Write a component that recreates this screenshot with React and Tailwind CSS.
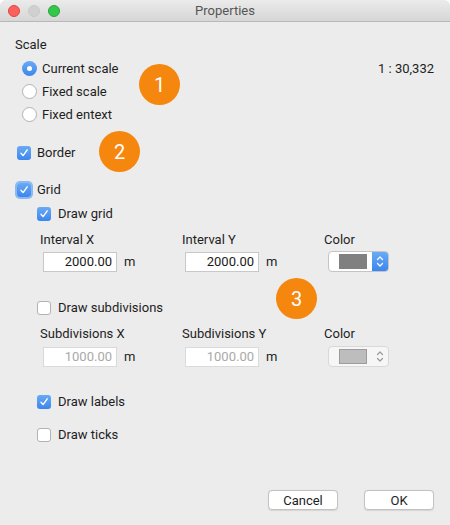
import React from 'react';

const Check = ({ checked, focus, className = '' }) => (
  <span
    className={`flex h-[14px] w-[14px] shrink-0 items-center justify-center rounded-[3px] ${
      checked ? 'bg-gradient-to-b from-[#6aaaf5] to-[#3b86ee]' : 'border border-[#b2b2b2] bg-white'
    } ${focus ? 'ring-[2px] ring-[#8ab8f0]' : ''} ${className}`}
  >
    {checked && (
      <svg width="10" height="10" viewBox="0 0 10 10">
        <path d="M2 5.3 L4.1 7.6 L8.2 1.8" fill="none" stroke="#fff" strokeWidth="1.4" strokeLinecap="round" strokeLinejoin="round" />
      </svg>
    )}
  </span>
);

const Radio = ({ checked }) => (
  <span
    className={`flex h-[15px] w-[15px] shrink-0 items-center justify-center rounded-full ${
      checked ? 'bg-gradient-to-b from-[#6aaaf5] to-[#3b86ee]' : 'border border-[#b2b2b2] bg-white'
    }`}
  >
    {checked && <span className="h-[5px] w-[5px] rounded-full bg-white" />}
  </span>
);

const Badge = ({ n, className }) => (
  <div
    className={`absolute flex h-[41px] w-[41px] items-center justify-center rounded-full bg-[#f5870e] text-[20px] text-white ${className}`}
  >
    {n}
  </div>
);

const Field = ({ value, disabled }) => (
  <div className="flex items-center">
    <div
      className={`ml-[3px] flex h-[20px] w-[74px] items-center justify-end border border-[#c8c8c8] bg-white pr-[4px] text-[13px] ${
        disabled ? 'border-[#dadada] text-[#a9a9a9]' : 'text-[#1a1a1a]'
      }`}
    >
      {value}
    </div>
    <span className="ml-[7px] text-[13px]">m</span>
  </div>
);

const ColorPop = ({ disabled }) => (
  <div
    className={`ml-[4px] flex h-[21px] w-[61px] overflow-hidden rounded-[4px] border ${
      disabled ? 'border-[#d8d8d8] bg-[#f6f6f6]' : 'border-[#c4c4c4] bg-white'
    }`}
  >
    <div className="flex flex-1 items-center pl-[10px]">
      <div className={`h-[15px] w-[28px] ${disabled ? 'border border-[#9c9c9c] bg-[#bdbdbd]' : 'bg-[#808080]'}`} />
    </div>
    <div
      className={`flex w-[16px] items-center justify-center ${
        disabled ? '' : 'bg-gradient-to-b from-[#6aaaf5] to-[#3b86ee]'
      }`}
    >
      <svg width="8" height="13" viewBox="0 0 8 13">
        <path
          d="M1.5 4.5 L4 2 L6.5 4.5 M1.5 8.5 L4 11 L6.5 8.5"
          fill="none"
          stroke={disabled ? '#9a9a9a' : '#fff'}
          strokeWidth="1.2"
          strokeLinecap="round"
          strokeLinejoin="round"
        />
      </svg>
    </div>
  </div>
);

export default function App() {
  return (
    <div className="bg-white" style={{ fontFamily: 'Roboto, "Liberation Sans", sans-serif' }}>
      <div className="relative h-[525px] w-[450px] overflow-hidden rounded-t-[6px] bg-[#ececec] text-[13px] text-[#1e1e1e]">
        {/* title bar */}
        <div className="relative flex h-[22px] items-center justify-center border-b border-[#b8b8b8] bg-gradient-to-b from-[#ebebeb] to-[#d6d6d6]">
          <div className="absolute left-[8px] top-[5px] flex gap-[8px]">
            <span className="h-[12px] w-[12px] rounded-full border border-[#e0443e] bg-[#fc605c]" />
            <span className="h-[12px] w-[12px] rounded-full border border-[#c8c8c8] bg-[#d0d0d0]" />
            <span className="h-[12px] w-[12px] rounded-full border border-[#2aa43a] bg-[#34c84a]" />
          </div>
          <span className="text-[13px] text-[#555]">Properties</span>
        </div>

        <div className="px-[15px]">
          <div className="mt-[15px] flex h-[16px] items-center">Scale</div>

          <div className="mt-[4px] pl-[7px]">
            <div className="flex h-[23px] items-center">
              <Radio checked />
              <span className="ml-[5px]">Current scale</span>
              <span className="ml-auto mr-[1px]">1 : 30,332</span>
            </div>
            <div className="flex h-[23px] items-center">
              <Radio />
              <span className="ml-[5px]">Fixed scale</span>
            </div>
            <div className="flex h-[23px] items-center">
              <Radio />
              <span className="ml-[5px]">Fixed entext</span>
            </div>
          </div>

          <div className="mt-[16px] flex h-[22px] items-center pl-[2px]">
            <Check checked />
            <span className="ml-[6px]">Border</span>
          </div>

          <div className="mt-[15px] flex h-[22px] items-center pl-[2px]">
            <Check checked focus />
            <span className="ml-[6px]">Grid</span>
          </div>

          <div className="pl-[22px]">
            <div className="mt-[2px] flex h-[22px] items-center">
              <Check checked />
              <span className="ml-[7px]">Draw grid</span>
            </div>

            <div className="mt-[5px] grid h-[16px] grid-cols-[142px_142px_1fr] items-center pl-[3px]">
              <span>Interval X</span>
              <span>Interval Y</span>
              <span>Color</span>
            </div>
            <div className="mt-[5px] grid h-[21px] grid-cols-[142px_142px_1fr] items-center pl-[3px]">
              <Field value="2000.00" />
              <Field value="2000.00" />
              <ColorPop />
            </div>

            <div className="mt-[25px] flex h-[22px] items-center">
              <Check />
              <span className="ml-[7px]">Draw subdivisions</span>
            </div>

            <div className="mt-[5px] grid h-[16px] grid-cols-[142px_142px_1fr] items-center pl-[3px]">
              <span>Subdivisions X</span>
              <span>Subdivisions Y</span>
              <span>Color</span>
            </div>
            <div className="mt-[6px] grid h-[20px] grid-cols-[142px_142px_1fr] items-center pl-[3px]">
              <Field value="1000.00" disabled />
              <Field value="1000.00" disabled />
              <ColorPop disabled />
            </div>

            <div className="mt-[25px] flex h-[22px] items-center">
              <Check checked />
              <span className="ml-[7px]">Draw labels</span>
            </div>
            <div className="mt-[11px] flex h-[22px] items-center">
              <Check />
              <span className="ml-[7px]">Draw ticks</span>
            </div>
          </div>

          <div className="mt-[44px] flex justify-end gap-[26px] pr-[1px]">
            <button className="h-[20px] w-[70px] rounded-[4px] border border-[#c2c2c2] bg-white text-[13px] shadow-[0_0.5px_1px_rgba(0,0,0,0.1)]">
              Cancel
            </button>
            <button className="h-[20px] w-[70px] rounded-[4px] border border-[#c2c2c2] bg-white text-[13px] shadow-[0_0.5px_1px_rgba(0,0,0,0.1)]">
              OK
            </button>
          </div>
        </div>

        <Badge n="1" className="left-[139px] top-[64px]" />
        <Badge n="2" className="left-[99px] top-[131px]" />
        <Badge n="3" className="left-[276px] top-[278px]" />
      </div>
    </div>
  );
}
